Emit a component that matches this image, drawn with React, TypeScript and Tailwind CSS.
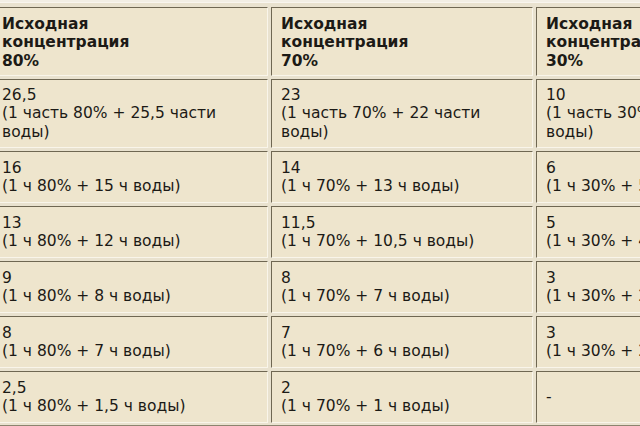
const header = ["80%", "70%", "30%"];

const rows: [string, string[]][][] = [
  [
    ["26,5", ["(1 часть 80% + 25,5 части", "воды)"]],
    ["23", ["(1 часть 70% + 22 части", "воды)"]],
    ["10", ["(1 часть 30% + 9 частей", "воды)"]],
  ],
  [
    ["16", ["(1 ч 80% + 15 ч воды)"]],
    ["14", ["(1 ч 70% + 13 ч воды)"]],
    ["6", ["(1 ч 30% + 5 ч воды)"]],
  ],
  [
    ["13", ["(1 ч 80% + 12 ч воды)"]],
    ["11,5", ["(1 ч 70% + 10,5 ч воды)"]],
    ["5", ["(1 ч 30% + 4 ч воды)"]],
  ],
  [
    ["9", ["(1 ч 80% + 8 ч воды)"]],
    ["8", ["(1 ч 70% + 7 ч воды)"]],
    ["3", ["(1 ч 30% + 2 ч воды)"]],
  ],
  [
    ["8", ["(1 ч 80% + 7 ч воды)"]],
    ["7", ["(1 ч 70% + 6 ч воды)"]],
    ["3", ["(1 ч 30% + 2 ч воды)"]],
  ],
  [
    ["2,5", ["(1 ч 80% + 1,5 ч воды)"]],
    ["2", ["(1 ч 70% + 1 ч воды)"]],
    ["-", []],
  ],
];

// classic inset cell of an old border=1 table
const cell =
  "flex flex-col justify-center px-[9px] bg-[#eee5cd] border border-t-[#6f6752] border-l-[#6f6752] border-b-[#f9f5ea] border-r-[#f9f5ea] whitespace-nowrap overflow-hidden";

export default function App() {
  return (
    <div className="w-[640px] h-[426px] overflow-hidden bg-[#f2eee4] pt-[2px] font-['DejaVu_Sans',Verdana,sans-serif] text-[15.5px] leading-[18.5px] text-[#1c1a16]">
      <div className="ml-[-11px] w-[820px] border border-t-[#f8f5ee] border-l-[#f8f5ee] border-b-[#8c846f] border-r-[#8c846f] bg-[#e9e2cf] px-[2px] pt-[4px] pb-[2px]">
        <div className="grid grid-cols-[276px_262px_262px] grid-rows-[69px_69px_repeat(5,52px)] gap-[3px]">
          {header.map((h) => (
            <div key={h} className={`${cell} font-bold pt-[2px]`}>
              <span>Исходная</span>
              <span>концентрация</span>
              <span>{h}</span>
            </div>
          ))}
          {rows.map((r, i) =>
            r.map(([num, lines], j) => (
              <div key={`${i}-${j}`} className={cell}>
                <span>{num}</span>
                {lines.map((l) => (
                  <span key={l}>{l}</span>
                ))}
              </div>
            ))
          )}
        </div>
      </div>
    </div>
  );
}
